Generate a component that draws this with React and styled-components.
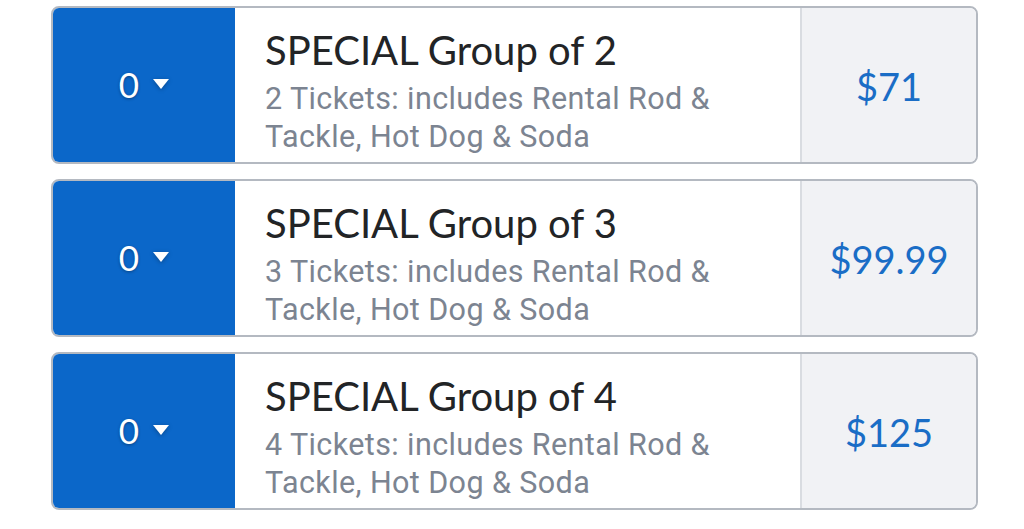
import React from "react"
import styled, { createGlobalStyle } from "styled-components"

const GlobalStyle = createGlobalStyle`
  html, body {
    margin: 0;
    padding: 0;
    background: #ffffff;
  }
`

const TicketList = styled.div`
  display: flex;
  flex-direction: column;
  gap: 15px;
  padding: 6px 46px 0 51px;
`

const Card = styled.div`
  display: flex;
  height: 158px;
  box-sizing: border-box;
  border: 2px solid #b4b9c1;
  border-radius: 8px;
  overflow: hidden;
  background: #ffffff;
`

const Qty = styled.div`
  width: 182px;
  flex-shrink: 0;
  display: flex;
  align-items: center;
  justify-content: center;
  gap: 14px;
  background: #0b67c9;
  color: #ffffff;
  font-family: Lato, "Noto Sans", sans-serif;
  font-size: 35px;
  text-shadow: 0 1px 3px rgba(0, 0, 0, 0.35);
  padding-bottom: 2px;
`

const Caret = styled.span`
  width: 0;
  height: 0;
  border-left: 8px solid transparent;
  border-right: 8px solid transparent;
  border-top: 10px solid #ffffff;
  filter: drop-shadow(0 1px 2px rgba(0, 0, 0, 0.3));
`

const Info = styled.div`
  flex: 1;
  display: flex;
  flex-direction: column;
  justify-content: center;
  padding: 14px 30px 0;
  border-right: 2px solid #d9dce1;
`

const Title = styled.div`
  font-family: Lato, "Noto Sans", sans-serif;
  font-size: 40px;
  line-height: 44px;
  color: #222426;
`

const Desc = styled.div`
  margin-top: 8px;
  font-family: Roboto, "Noto Sans", sans-serif;
  font-size: 30.5px;
  line-height: 38px;
  color: #7c8491;
  letter-spacing: 0.4px;
`

const Price = styled.div`
  width: 174px;
  flex-shrink: 0;
  display: flex;
  align-items: center;
  justify-content: center;
  background: #f1f2f5;
  color: #1a6dc6;
  font-family: Lato, "Noto Sans", sans-serif;
  font-size: 38px;
  padding-top: 2px;
`

const tickets = [
  { size: 2, price: "$71" },
  { size: 3, price: "$99.99" },
  { size: 4, price: "$125" },
]

const App = () => (
  <>
    <GlobalStyle />
    <TicketList>
      {tickets.map(t => (
        <Card key={t.size}>
          <Qty>
            0<Caret />
          </Qty>
          <Info>
            <Title>SPECIAL Group of {t.size}</Title>
            <Desc>
              {t.size} Tickets: includes Rental Rod &amp;
              <br />
              Tackle, Hot Dog &amp; Soda
            </Desc>
          </Info>
          <Price>{t.price}</Price>
        </Card>
      ))}
    </TicketList>
  </>
)

export default App
